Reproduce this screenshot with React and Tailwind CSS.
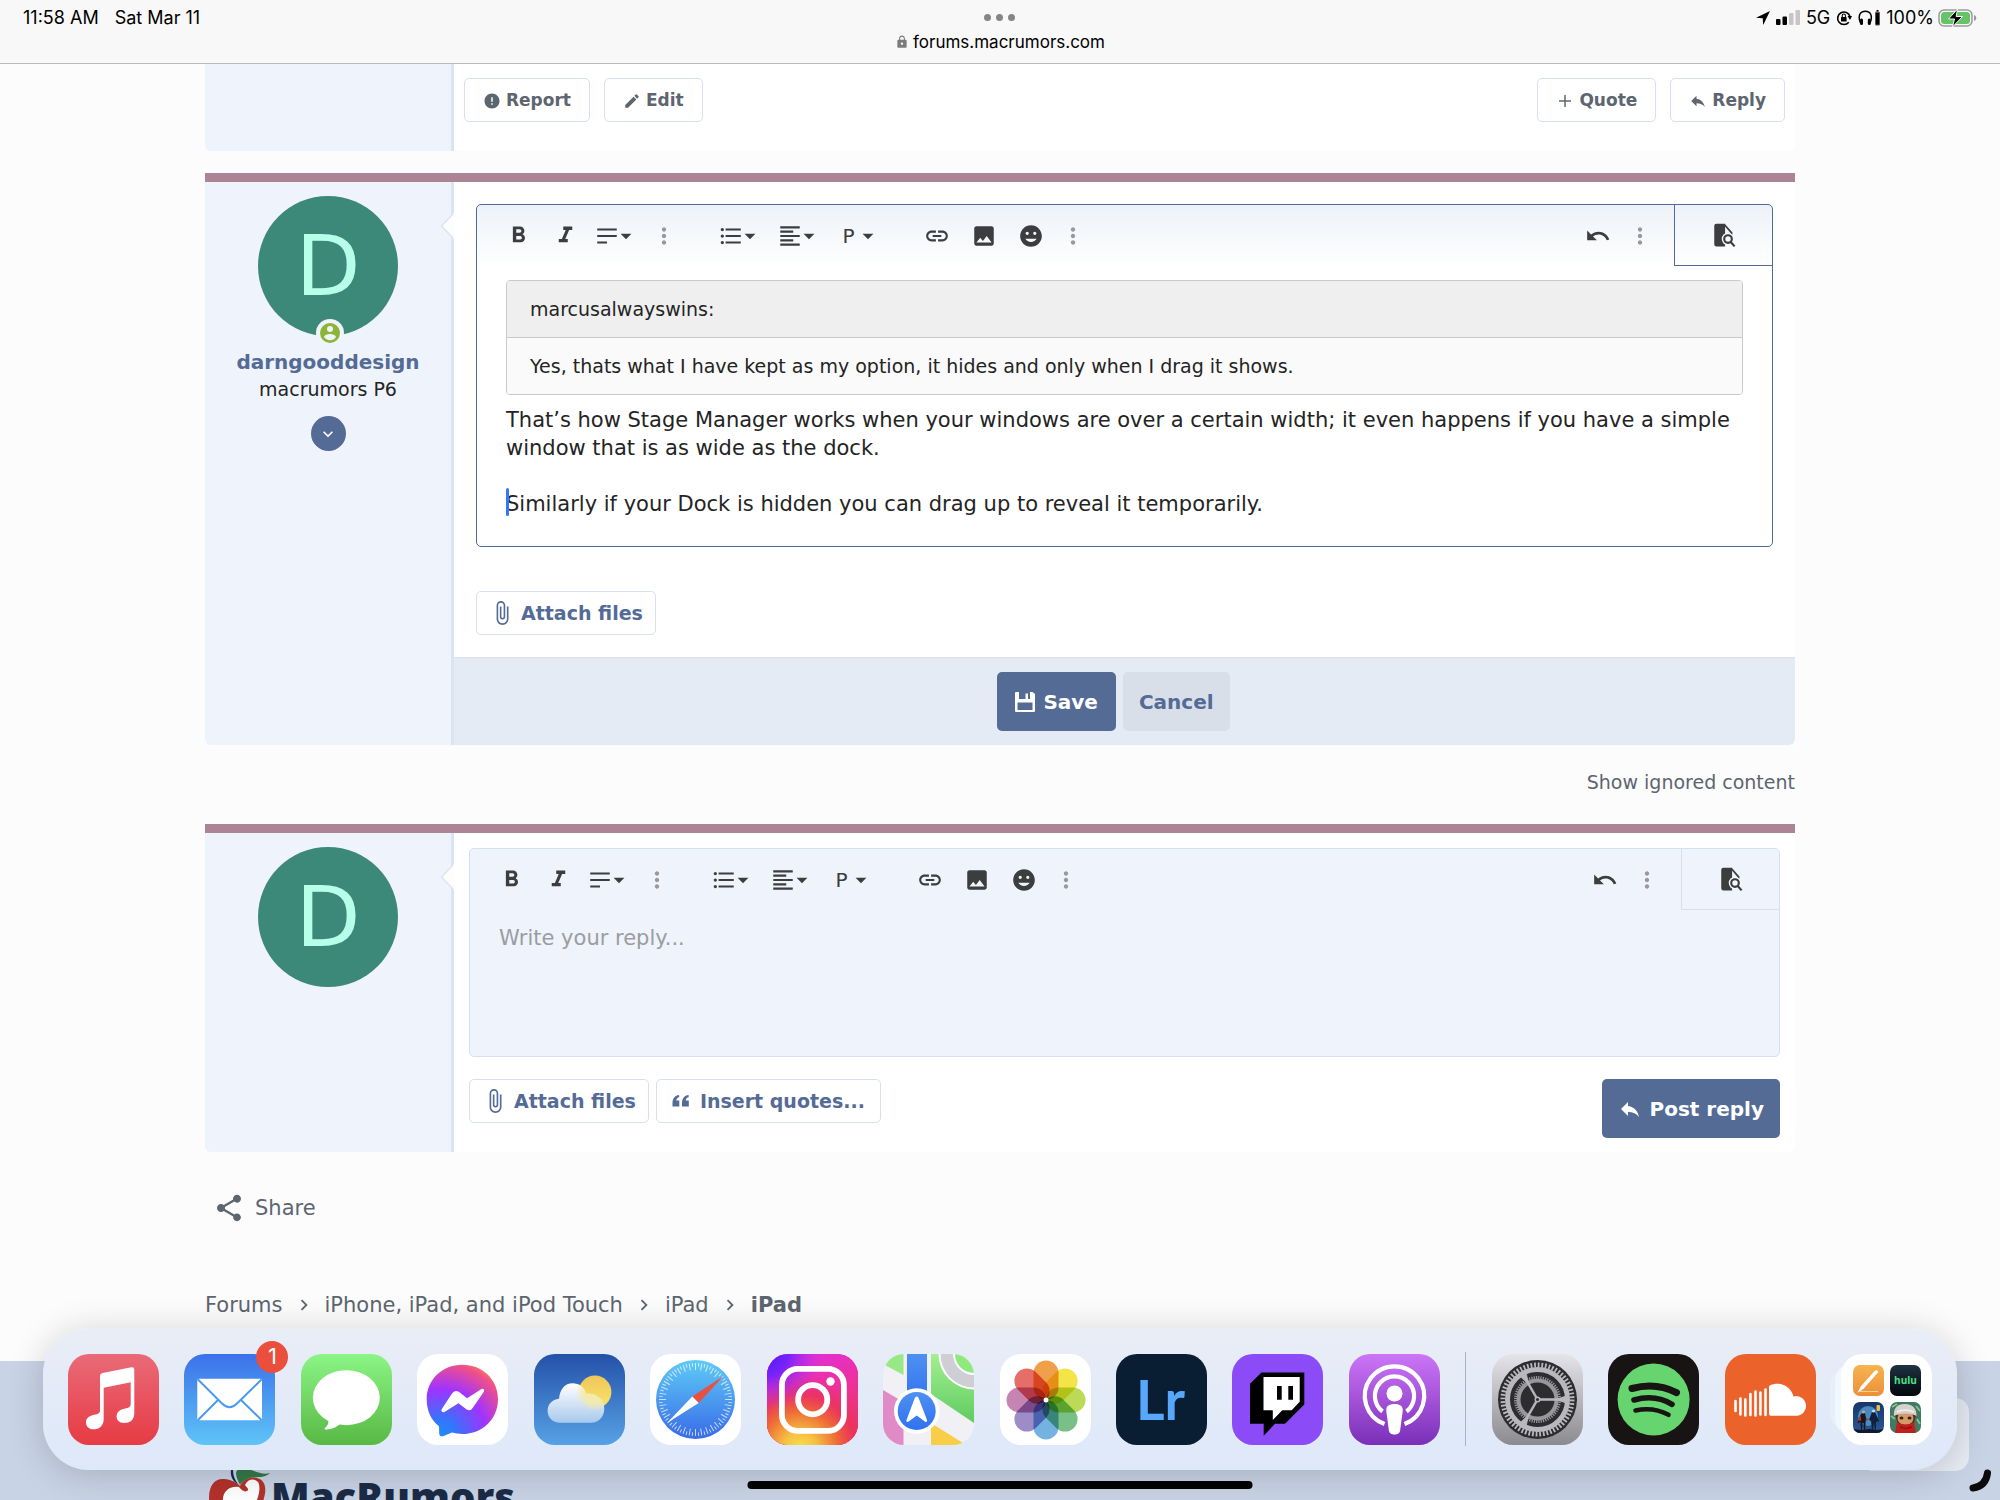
import {
  MdArrowDropDown,
  MdAttachFile,
  MdChevronRight,
  MdEdit,
  MdError,
  MdExpandMore,
  MdFormatAlignLeft,
  MdFormatBold,
  MdFormatItalic,
  MdFormatListBulleted,
  MdImage,
  MdInsertLink,
  MdLock,
  MdMoreVert,
  MdReply,
  MdShare,
  MdUndo,
} from "react-icons/md";

/* ---------- small glyphs ---------- */

const Svg = ({ children, className, box = "0 0 24 24" }) => (
  <svg viewBox={box} className={className} fill="currentColor" aria-hidden="true">
    {children}
  </svg>
);

const ParagraphLines = ({ className }) => (
  <Svg className={className}>
    <path d="M3 5h18v2H3zM3 11h18v2H3zM3 17h9v2H3z" />
  </Svg>
);

const Smiley = ({ className }) => (
  <Svg className={className}>
    <path d="M12 2C6.5 2 2 6.5 2 12s4.500 10 10 10 10-4.500 10-10S17.500 2 12 2zM8.500 8A1.500 1.500 0 0 1 10 9.500 1.500 1.500 0 0 1 8.500 11 1.500 1.500 0 0 1 7 9.500 1.500 1.500 0 0 1 8.500 8zm7 0A1.500 1.500 0 0 1 17 9.500a1.500 1.500 0 0 1-1.500 1.500A1.500 1.500 0 0 1 14 9.500 1.500 1.500 0 0 1 15.500 8zM12 17.500c-2.300 0-4.300-1.200-5.200-3h10.400c-.9 1.800-2.900 3-5.200 3z" />
  </Svg>
);

const FileFind = ({ className }) => (
  <Svg className={className}>
    <path d="M5 1.500a2 2 0 0 0-2 2v17a2 2 0 0 0 2 2h8V1.500z" />
    <path d="M12.500 2.500l6.500 7.500v3" fill="none" stroke="currentColor" strokeWidth="1.600" />
    <circle cx="15.700" cy="15.700" r="5.800" fill="#f5f8fc" />
    <circle cx="15.700" cy="15.700" r="3.500" fill="none" stroke="currentColor" strokeWidth="2" />
    <path d="M18 18.200l3.800 4.300" stroke="currentColor" strokeWidth="2" />
  </Svg>
);

const Floppy = ({ className }) => (
  <Svg className={className} box="0 0 20 20">
    <path
      fillRule="evenodd"
      d="M1 0h3v7h6.500V1.500h2.500V7h2V0h2.500L20 2v17a1 1 0 0 1-1 1H1a1 1 0 0 1-1-1V1a1 1 0 0 1 1-1zm1.500 10.500v7.500h15v-7.500z"
    />
  </Svg>
);

const Quotes = ({ className }) => (
  <Svg className={className} box="0 0 18 14">
    <path d="M7 1C3 1.500.500 4.500.500 9v3.500h6.800V6.500H4.200C4.400 4.700 5.500 3.500 7.300 3zM16.500 1C12.500 1.500 10 4.500 10 9v3.500h6.800V6.500h-3.100c.2-1.800 1.300-3 3.100-3.500z" />
  </Svg>
);

/* ---------- status bar ---------- */

const StatusBar = () => (
  <header className="grid h-16 shrink-0 grid-cols-3 border-b border-[#b9b9bb] bg-[#f8f8f8] px-[23px] font-['Inter',sans-serif] text-[18px] leading-[20px] text-black">
    <div className="flex gap-4 pt-[8px]">
      <span>11:58 AM</span>
      <span>Sat Mar 11</span>
    </div>
    <div className="flex flex-col items-center gap-[11px] pt-[14px]">
      <div className="flex gap-[5px]">
        <span className="size-[7px] rounded-full bg-[#858585]" />
        <span className="size-[7px] rounded-full bg-[#858585]" />
        <span className="size-[7px] rounded-full bg-[#858585]" />
      </div>
      <div className="flex items-center gap-[4px] text-[17px]">
        <MdLock className="size-[14px] text-[#7b7b7b]" />
        <span>forums.macrumors.com</span>
      </div>
    </div>
    <div className="flex h-[35px] items-center justify-end gap-[6px]">
      <svg viewBox="0 0 14 14" className="size-[14px]">
        <path d="M14 0L0 6.800l6.700.5.5 6.700z" />
      </svg>
      <svg viewBox="0 0 24 15" className="h-[15px] w-[24px]">
        <rect x="0" y="9" width="4.500" height="6" rx="1" />
        <rect x="6.500" y="6.500" width="4.500" height="8.500" rx="1" />
        <rect x="13" y="3" width="4.500" height="12" rx="1" fill="#c6c6c6" />
        <rect x="19.500" y="0" width="4.500" height="15" rx="1" fill="#c6c6c6" />
      </svg>
      <span>5G</span>
      <svg viewBox="0 0 16 16" className="size-[16px]">
        <path d="M12.800 12.300A6.300 6.300 0 1 1 14 6.500" fill="none" stroke="#000" strokeWidth="1.600" />
        <path d="M11.500 6h4.500l-2 4z" />
        <rect x="5" y="7" width="5.600" height="4.500" rx=".6" />
        <path d="M6.200 7V5.600a1.600 1.600 0 0 1 3.200 0V7" fill="none" stroke="#000" strokeWidth="1.100" />
      </svg>
      <svg viewBox="0 0 22 16" className="h-[16px] w-[22px]">
        <path d="M2.500 13C-.5 6 2 1.200 7.300 1.200S15 6 12.100 13" fill="none" stroke="#000" strokeWidth="1.500" />
        <rect x="2" y="8.500" width="3" height="6.500" rx="1.500" />
        <rect x="9.800" y="8.500" width="3" height="6.500" rx="1.500" />
        <rect x="17" y="1.500" width="5" height="14" rx="1.500" fill="#555" />
        <rect x="18" y="3" width="3" height="11.500" />
        <rect x="18.500" y="0" width="2" height="1.500" />
      </svg>
      <div className="flex items-center gap-[4px]">
        <span>100%</span>
        <svg viewBox="0 0 39 18" className="h-[18px] w-[39px]">
          <rect x="1" y="1" width="33" height="16" rx="5" fill="none" stroke="#9b9b9b" strokeWidth="1.500" />
          <rect x="3" y="3" width="29" height="12" rx="3.500" fill="#65c466" />
          <path d="M36 6v6c3-1 3-5 0-6z" fill="#9b9b9b" />
          <path d="M19.500 0L10.500 10h6l-2 8L24.500 7.500h-6.300z" fill="#000" stroke="#f8f8f8" strokeWidth="1" />
        </svg>
      </div>
    </div>
  </header>
);

/* ---------- posts ---------- */

const Avatar = () => (
  <div className="mt-[14px] flex size-[140px] items-center justify-center rounded-full bg-[#3d8979] text-[84px] leading-none text-[#b8ffe9]">
    D
  </div>
);

const Sidebar = ({ children, notch }) => (
  <aside className="relative flex w-[249px] shrink-0 flex-col items-center rounded-bl-md border-r-[3px] border-[#dbe4f1] bg-[#eff3fb]">
    {children}
    {notch && (
      <svg viewBox="0 0 14 26" className="absolute -right-[3px] top-[31px] h-[26px] w-[14px]">
        <path d="M14 0L1.500 13 14 26z" fill="#fdfdfe" />
        <path d="M13 1L1.500 13 13 25" fill="none" stroke="#dbe4f1" strokeWidth="1.500" />
      </svg>
    )}
  </aside>
);

const outline =
  "flex h-[44px] items-center rounded-[5px] border border-[#d6e0ef] bg-white font-bold";

const PostAction = ({ icon: Icon, children }) => (
  <button className={`${outline} gap-[5px] px-[18px] pt-[2px] text-[17px] text-[#5d6570]`}>
    <Icon className="size-[18px]" />
    {children}
  </button>
);

const AttachButton = () => (
  <button className={`${outline} gap-[6px] px-[12px] text-[19px] text-[#546b96]`}>
    <MdAttachFile className="size-[26px]" />
    Attach files
  </button>
);

const PlusThin = ({ className }) => (
  <Svg className={className}>
    <path d="M11 4h2v7h7v2h-7v7h-2v-7H4v-2h7z" />
  </Svg>
);

/* ---------- editor ---------- */

const Tool = ({ label, children, width = "w-[47px]" }) => (
  <button aria-label={label} className={`flex h-full items-center justify-center ${width}`}>
    {children}
  </button>
);

const Caret = () => <MdArrowDropDown className="-ml-[7px] -mr-[5px] size-[26px]" />;

const Dots = () => <MdMoreVert className="size-[26px] text-[#999]" />;

const Toolbar = ({ line }) => (
  <div className="flex h-[61px] items-center pl-[18px] text-[#3c3d3e]">
    <Tool label="Bold"><MdFormatBold className="size-[27px]" /></Tool>
    <Tool label="Italic"><MdFormatItalic className="size-[27px]" /></Tool>
    <Tool label="More text" width="w-[50px]">
      <ParagraphLines className="size-[26px]" />
      <Caret />
    </Tool>
    <Tool label="More options" width="w-[50px]"><Dots /></Tool>
    <div className="w-[19px]" />
    <Tool label="List" width="w-[59px]">
      <MdFormatListBulleted className="size-[26px]" />
      <Caret />
    </Tool>
    <Tool label="Alignment" width="w-[59px]">
      <MdFormatAlignLeft className="size-[26px]" />
      <Caret />
    </Tool>
    <Tool label="Paragraph format" width="w-[59px]">
      <span className="w-[26px] text-[20px]">P</span>
      <Caret />
    </Tool>
    <div className="w-[28px]" />
    <Tool label="Insert link"><MdInsertLink className="size-[26px]" /></Tool>
    <Tool label="Insert image"><MdImage className="size-[26px]" /></Tool>
    <Tool label="Smilies"><Smiley className="size-[26px]" /></Tool>
    <Tool label="Insert more" width="w-[38px]"><Dots /></Tool>
    <div className="flex-1" />
    <Tool label="Undo"><MdUndo className="size-[26px]" /></Tool>
    <Tool label="More history" width="w-[38px]"><Dots /></Tool>
    <div className="w-[15px]" />
    <div className={`h-full w-[98px] border-b border-l ${line}`}>
      <Tool label="Preview" width="w-full"><FileFind className="size-[26px]" /></Tool>
    </div>
  </div>
);

const EditEditor = () => (
  <div className="rounded-[5px] border border-[#4f6a9c] bg-white bg-[linear-gradient(#edf2f8,#ffffff_62px)]">
    <Toolbar line="border-[#4f6a9c]" />
    <div
      role="textbox"
      aria-label="Message"
      contentEditable
      suppressContentEditableWarning
      className="px-[29px] pb-[28px] pt-[14px] text-[21px] leading-[28px] text-[#242424] outline-none"
    >
      <blockquote className="overflow-hidden rounded-[4px] border border-[#c9c9c9] text-[19px]">
        <div className="border-b border-[#c9c9c9] bg-[#efefef] px-[23px] py-[14px]">marcusalwayswins:</div>
        <div className="bg-[#fafafa] px-[23px] py-[14px]">
          Yes, thats what I have kept as my option, it hides and only when I drag it shows.
        </div>
      </blockquote>
      <p className="mt-[11px]">
        That’s how Stage Manager works when your windows are over a certain width; it even happens if you have a simple
        window that is as wide as the dock.
      </p>
      <p className="relative mt-[28px]">
        <span className="absolute -top-[2px] left-0 h-[28px] w-[3px] rounded-full bg-[#3478f6]" />
        Similarly if your Dock is hidden you can drag up to reveal it temporarily.
      </p>
    </div>
  </div>
);

const ReplyEditor = () => (
  <div className="rounded-[5px] border border-[#d6e0ef] bg-[#eff3fb]">
    <Toolbar line="border-[#d6e0ef]" />
    <textarea
      aria-label="Write your reply"
      placeholder="Write your reply..."
      className="block h-[146px] w-full resize-none bg-transparent px-[29px] pt-[14px] text-[21px] leading-[28px] outline-none placeholder:text-[#9a9da1]"
    />
  </div>
);

/* ---------- dock icons, each on a 91 unit tile ---------- */

const Tile = ({ id, colors, fill, children }) => (
  <svg viewBox="0 0 91 91" className="size-full">
    <defs>
      {colors && (
        <linearGradient id={id} x1="0" y1="0" x2="0" y2="1">
          <stop offset="0" stopColor={colors[0]} />
          <stop offset="1" stopColor={colors[1]} />
        </linearGradient>
      )}
      <clipPath id={`${id}-clip`}>
        <rect width="91" height="91" rx="21" />
      </clipPath>
    </defs>
    <g clipPath={`url(#${id}-clip)`}>
      <rect width="91" height="91" fill={colors ? `url(#${id})` : fill} />
      {children}
    </g>
  </svg>
);

const Music = () => (
  <Tile id="music" colors={["#ea6a78", "#e63b44"]}>
    <path
      fill="#fff"
      d="M32 22Q32 19.500 34.500 19L63.500 13.200Q66.300 12.800 66.300 15.500V59C66.300 66 62 69 56 69C51 69 48.600 66 48.600 62.500C48.600 58 52 55.500 57 54.500C61 53.700 62.700 53 62.700 50V28.200L35.700 33.700V65C35.700 72 31 75.300 25.500 75.300C20.500 75.300 18 72 18 68.500C18 64 21.500 61.700 26 60.800C30.500 60 32 59 32 56Z"
    />
  </Tile>
);

const Mail = () => (
  <Tile id="mail" colors={["#3b71ea", "#5fc4f7"]}>
    <rect x="13.300" y="24.700" width="64.700" height="41.600" rx="2" fill="#fff" />
    <path
      d="M14 25.500L38 49.500Q45.500 57 53 49.500L77.500 25.500M34 46L14 66M57 46L77.500 66"
      fill="none"
      stroke="#4a9af0"
      strokeWidth="2"
    />
  </Tile>
);

const Messages = () => (
  <Tile id="messages" colors={["#8bf585", "#58b844"]}>
    <ellipse cx="45.300" cy="43.700" rx="33.500" ry="27.500" fill="#fff" />
    <path d="M27 64Q29 70 23.500 74.500Q24 76 26 75.500Q35 74.500 40 69Z" fill="#fff" />
  </Tile>
);

const Messenger = () => (
  <Tile id="messenger" fill="#fff">
    <defs>
      <radialGradient id="bubble" cx=".19" cy=".99" r="1.090">
        <stop offset="0" stopColor="#1e8dfb" />
        <stop offset=".2" stopColor="#3276fb" />
        <stop offset=".6" stopColor="#a033ff" />
        <stop offset=".93" stopColor="#f0508a" />
        <stop offset="1" stopColor="#f1706a" />
      </radialGradient>
    </defs>
    <path
      fill="url(#bubble)"
      d="M45.300 10.700C65.500 10.700 81 25.500 81 45.200S65.500 80 45.300 80C41.500 80 38 79.400 35 78.600L26 82.200Q22.500 83 22.200 79.500L22 72.300C14 66 9.700 56.500 9.700 45.200C9.700 25.500 25.500 10.700 45.300 10.700Z"
    />
    <path
      fill="#fff"
      d="M24.500 55.500L35 39.500Q38 35 42.500 38.300L50 44.200L64.500 35Q67.500 34.300 67 37.500L56 53.500Q53.500 58 49 55L41.500 49.300L27 58.200Q24 58.500 24.500 55.500Z"
    />
  </Tile>
);

const cloud =
  "M25 44.800C26 35 31 29.300 38.500 29.300C45.500 29.300 50 33 52 39.800C62 38.500 70.300 45 70.300 54.500C70.300 63 64.500 68.700 57 68.700H26C18.500 68.700 13.600 63.500 13.600 56.800C13.600 50.500 18 45.500 25 44.800Z";

const Weather = () => (
  <Tile id="weather" colors={["#2451a8", "#56a2e6"]}>
    <defs>
      <linearGradient id="sun" x1="0" y1="0" x2="0" y2="1">
        <stop offset="0" stopColor="#f0c55a" />
        <stop offset="1" stopColor="#f8e66a" />
      </linearGradient>
      <linearGradient id="cloud" x1="0" y1="0" x2="0" y2="1">
        <stop offset="0" stopColor="#fff" />
        <stop offset="1" stopColor="#a9c9ec" />
      </linearGradient>
      <radialGradient id="glow">
        <stop offset=".6" stopColor="#f7eaa0" stopOpacity=".85" />
        <stop offset="1" stopColor="#f7eaa0" stopOpacity="0" />
      </radialGradient>
      <clipPath id="cloud-clip"><path d={cloud} /></clipPath>
    </defs>
    <circle cx="61" cy="38" r="16.400" fill="url(#sun)" />
    <path d={cloud} fill="url(#cloud)" />
    <circle cx="61" cy="38" r="19" fill="url(#glow)" clipPath="url(#cloud-clip)" />
  </Tile>
);

const Safari = () => (
  <Tile id="safari" fill="#fff">
    <defs>
      <linearGradient id="dial" x1="0" y1="0" x2="0" y2="1">
        <stop offset="0" stopColor="#5fcbf6" />
        <stop offset="1" stopColor="#386be8" />
      </linearGradient>
    </defs>
    <circle cx="45.500" cy="45.500" r="39.500" fill="url(#dial)" />
    {Array.from({ length: 72 }, (_, i) => (
      <path
        key={i}
        d={i % 2 ? "M45.500 9v3.500" : "M45.500 9v7"}
        stroke="#fff"
        strokeOpacity=".7"
        transform={`rotate(${i * 5} 45.500 45.500)`}
      />
    ))}
    <path d="M73.500 22L42.300 42.500L48.700 49Z" fill="#e8503f" />
    <path d="M17 69L42.300 42.500L48.700 49Z" fill="#fff" />
  </Tile>
);

const Instagram = () => (
  <Tile id="instagram" fill="#e92f8c">
    <defs>
      <linearGradient id="ig-base" x1="0" y1="0" x2=".3" y2="1">
        <stop offset="0" stopColor="#dc30e8" />
        <stop offset=".45" stopColor="#ec30a8" />
        <stop offset="1" stopColor="#ee3560" />
      </linearGradient>
      <radialGradient id="ig-warm" cx=".36" cy="1.050" r=".85">
        <stop offset="0" stopColor="#fbe04a" />
        <stop offset=".22" stopColor="#f6c043" />
        <stop offset=".5" stopColor="#ee6a35" />
        <stop offset=".72" stopColor="#ea3358" stopOpacity=".8" />
        <stop offset="1" stopColor="#e92f8c" stopOpacity="0" />
      </radialGradient>
      <radialGradient id="ig-cool" cx="0" cy="0" r=".6">
        <stop offset="0" stopColor="#4a1cff" />
        <stop offset=".4" stopColor="#7a22f8" />
        <stop offset="1" stopColor="#c030f0" stopOpacity="0" />
      </radialGradient>
    </defs>
    <rect width="91" height="91" fill="url(#ig-base)" />
    <rect width="91" height="91" fill="url(#ig-warm)" />
    <rect width="91" height="91" fill="url(#ig-cool)" />
    <g fill="none" stroke="#fff" strokeWidth="5.800">
      <rect x="14.900" y="14.900" width="62" height="62" rx="16" />
      <circle cx="45.700" cy="45.700" r="14.600" />
    </g>
    <circle cx="63.500" cy="27.500" r="4.200" fill="#fff" />
  </Tile>
);

const Maps = () => (
  <Tile id="maps" fill="#f1f0f5">
    <defs>
      <linearGradient id="park" x1="0" y1="0" x2="0" y2="1">
        <stop offset="0" stopColor="#a2f08e" />
        <stop offset="1" stopColor="#60cb62" />
      </linearGradient>
      <linearGradient id="road" x1="0" y1="0" x2="0" y2="1">
        <stop offset="0" stopColor="#4f90f2" />
        <stop offset="1" stopColor="#2f72f0" />
      </linearGradient>
    </defs>
    <path d="M0 0H20.500V21L0 10Z" fill="#97e986" />
    <path d="M48 0H91V69L48 40Z" fill="url(#park)" />
    <circle cx="91" cy="0" r="35.500" fill="#fff" />
    <circle cx="91" cy="0" r="33.500" fill="#cfced4" />
    <circle cx="91" cy="0" r="21" fill="#fff" />
    <circle cx="91" cy="0" r="19" fill="#8fe97f" />
    <path d="M0 36L20.500 48V91H0Z" fill="#e18ac8" />
    <path d="M48 69L80 89V91H48Z" fill="#f7ce45" />
    <path d="M24 0H44V50H24Z" fill="url(#road)" />
    <circle cx="33.700" cy="57" r="22.700" fill="#fff" />
    <circle cx="33.700" cy="57" r="19" fill="url(#road)" />
    <path d="M33.700 42.500C35 42.500 35.500 43.500 36 45L44 66C44.500 68 43 68.500 41.500 67.300L33.700 61.500L26 67.300C24.500 68.500 23 68 23.500 66L31.400 45C32 43.500 32.500 42.500 33.700 42.500Z" fill="#fff" />
  </Tile>
);

const petals = ["#f0a04b", "#f3e448", "#bcd957", "#78c088", "#74b2e2", "#9d8cc6", "#c684b2", "#e56e68"];

const Photos = () => (
  <Tile id="photos" fill="#fff">
    {petals.map((color, i) => (
      <rect
        key={color}
        x="33.500"
        y="6.500"
        width="25"
        height="39.500"
        rx="12.500"
        fill={color}
        className="mix-blend-multiply"
        transform={`rotate(${i * 45} 46 46)`}
      />
    ))}
    <circle cx="46" cy="46" r="2.500" fill="#fff" />
  </Tile>
);

const Lightroom = () => (
  <Tile id="lightroom" fill="#0a1e33">
    <text x="20" y="65.500" fontSize="55" fill="#57a7fa" className="font-['Lato',sans-serif] font-bold">
      Lr
    </text>
  </Tile>
);

const Twitch = () => (
  <Tile id="twitch" fill="#8b4bf7">
    <path d="M29.500 18.500H72.300V50.500L53 69.700H43L31.700 81.700V69.700H18V29.700Z" />
    <path d="M31.500 23H67.700V47.700L59.700 56.300H50.300L40.800 66V56.300H31.500Z" fill="#fff" />
    <path d="M45 32h4.700v13.700H45zM56.300 32H61v13.700h-4.700z" />
  </Tile>
);

const Podcasts = () => (
  <Tile id="podcasts" colors={["#cc75f7", "#7a2fb8"]}>
    <g fill="none" stroke="#fff" strokeWidth="4.200">
      <path d="M35.500 70A29.700 29.700 0 1 1 55.500 70" />
      <path d="M33.500 57.500A19.600 19.600 0 1 1 57.500 57.500" />
    </g>
    <circle cx="45.500" cy="39.500" r="8" fill="#fff" />
    <path d="M45.500 50C51 50 54.200 52 53.700 57L51.200 76C50.700 79.500 48.500 80.500 45.500 80.500S40.300 79.500 39.800 76L37.300 57C36.800 52 40 50 45.500 50Z" fill="#fff" />
  </Tile>
);

const Settings = () => (
  <Tile id="settings" colors={["#e5e4ea", "#8b8a8f"]}>
    <circle cx="45.500" cy="45.500" r="39.500" fill="#2d2d2f" />
    <circle cx="45.500" cy="45.500" r="34.500" fill="none" stroke="#b9b8be" strokeWidth="5" strokeDasharray="1.800 1.812" />
    <circle cx="45.500" cy="45.500" r="30" fill="none" stroke="#b9b8be" strokeWidth="5" />
    <circle cx="45.500" cy="45.500" r="19" fill="none" stroke="#98979c" strokeWidth="4" />
    <circle cx="45.500" cy="45.500" r="22" fill="none" stroke="#98979c" strokeWidth="3" strokeDasharray="1.200 1.104" />
    {[0, 120, 240].map((angle) => (
      <g key={angle} transform={`rotate(${angle} 45.500 45.500)`}>
        <path d="M45.500 44.600H66L74 42V49L66 46.400H45.500Z" fill="#b9b8be" stroke="#b9b8be" strokeWidth=".6" />
      </g>
    ))}
    <circle cx="45.500" cy="45.500" r="3" fill="#b9b8be" />
    <circle cx="45.500" cy="45.500" r="1.500" fill="#2d2d2f" />
  </Tile>
);

const Spotify = () => (
  <Tile id="spotify" fill="#191414">
    <circle cx="45.600" cy="45.600" r="36" fill="#66d56f" />
    <g fill="none" stroke="#191414" strokeLinecap="round">
      <path d="M24 34.500Q48 28 68.500 38.700" strokeWidth="7" />
      <path d="M26 46Q47 40 64 50.300" strokeWidth="5.600" />
      <path d="M27.500 56.500Q45 52.500 60.500 60.800" strokeWidth="4.600" />
    </g>
  </Tile>
);

const SoundCloud = () => (
  <Tile id="soundcloud" fill="#ec622b">
    <path
      d="M10.500 47v10M15.400 44.500v16M20.300 45.500v16M25.400 40v21M30.500 37.500v24M35.400 38.500v22M40.500 35.500v25.500"
      stroke="#fff"
      strokeWidth="2.600"
      strokeLinecap="round"
    />
    <path d="M44 32C47 30 50 29.700 52.500 29.700C60.500 29.700 67 35.500 68.500 42.500A9.800 9.800 0 1 1 71.500 61.700H46Q44 61.700 44 59.700Z" fill="#fff" />
  </Tile>
);

/* ---------- app library folder ---------- */

const PagesMini = () => (
  <svg viewBox="0 0 31 31" className="size-[31px] rounded-[7px] bg-linear-to-b from-[#f5b550] to-[#ec8f3a]">
    <path d="M6 26L8 22L22 6.500Q24 5 24.500 7L10 23.500Z" fill="#fff" stroke="#fff" strokeWidth="1.200" />
    <path d="M7 26.500h18" stroke="#f9cf94" strokeWidth="1" />
  </svg>
);

const HuluMini = () => (
  <svg viewBox="0 0 31 31" className="size-[31px] rounded-[7px] bg-linear-to-b from-[#1e3342] to-[#04080d]">
    <text x="15.500" y="19" textAnchor="middle" fontSize="10" fill="#4be083" className="font-['Open_Sans',sans-serif] font-bold">
      hulu
    </text>
  </svg>
);

const HeroesMini = () => (
  <svg viewBox="0 0 31 31" className="size-[31px] rounded-[7px] bg-linear-to-b from-[#173568] to-[#2a5a96]">
    <circle cx="15" cy="14" r="10" fill="#5aa8e2" opacity=".7" />
    <path d="M0 31V27L8 28 16 27 24 28 31 27V31Z" fill="#10192b" />
    <path d="M9 11h3l1 5-1 12h-1l-.500-7-1 0-.5 7H8l-.5-8-3 1 3-8z" fill="#1b1520" />
    <path d="M19 10h3l4 9-3 1v8h-1l-1-7-1 7h-1l-1-9-2-1z" fill="#12203b" />
    <path d="M4 18l4-4v5zM13 16l3 1-3 2z" fill="#a53a34" />
    <circle cx="10.500" cy="10" r="1.600" fill="#c9a58b" />
    <circle cx="20.500" cy="9" r="1.600" fill="#cfd6e4" />
    <rect x="23.500" y="3" width="3.500" height="6" rx="1" fill="#e6c04c" />
  </svg>
);

const ScarfMini = () => (
  <svg viewBox="0 0 31 31" className="size-[31px] rounded-[7px] bg-[#3f7a62]">
    <path d="M2 5l5-3M1 14l4 3M26 4l4 5M27 17l3 5" stroke="#8dbb8f" strokeWidth="2" />
    <path d="M5 13L9 25H23L26 13Z" fill="#5b2c1c" />
    <ellipse cx="15.500" cy="16" rx="8" ry="7" fill="#d69a68" />
    <path d="M4 14C3 5 9 1.500 15 2C23 2 27 7 26.500 14C22 10.500 9 10.500 4 14Z" fill="#d4d0cb" />
    <path d="M7 10Q15 6 24 10" fill="none" stroke="#f1efec" strokeWidth="1.500" />
    <ellipse cx="11.500" cy="16" rx="2" ry="1.600" fill="#2c2a1c" />
    <ellipse cx="19.500" cy="16" rx="2" ry="1.600" fill="#2c2a1c" />
    <path d="M7 20Q15.500 25 24 20L26 31H5Z" fill="#bf1f1d" />
    <path d="M10 25Q15 28 22 25" stroke="#7d0f10" fill="none" />
  </svg>
);

const Folder = () => (
  <div className="relative h-full">
    <div className="absolute inset-y-[14px] -left-[11px] w-[60px] rounded-[18px] bg-[#e6f0fb]" />
    <div className="absolute inset-y-[9px] -left-[6px] w-[60px] rounded-[18px] bg-[#eff8fe]" />
    <div className="relative grid h-full grid-cols-[31px_31px] place-content-center gap-[6px] rounded-[21px] bg-white">
      <PagesMini />
      <HuluMini />
      <HeroesMini />
      <ScarfMini />
    </div>
  </div>
);

const apps = [
  ["Music", Music],
  ["Mail", Mail, 1],
  ["Messages", Messages],
  ["Messenger", Messenger],
  ["Weather", Weather],
  ["Safari", Safari],
  ["Instagram", Instagram],
  ["Maps", Maps],
  ["Photos", Photos],
  ["Lightroom", Lightroom],
  ["Twitch", Twitch],
  ["Podcasts", Podcasts],
];

const recents = [
  ["Settings", Settings],
  ["Spotify", Spotify],
  ["SoundCloud", SoundCloud],
  ["App Library", Folder],
];

const DockItem = ({ name, icon: Icon, badge }) => (
  <button aria-label={name} className="relative size-[91px]">
    <Icon />
    {badge && (
      <span className="absolute -right-[13px] -top-[13px] flex size-[32px] items-center justify-center rounded-full bg-[#ea4e3c] font-['Inter',sans-serif] text-[22px] text-white">
        {badge}
      </span>
    )}
  </button>
);

const Dock = () => (
  <nav
    aria-label="Dock"
    className="absolute inset-x-[43px] bottom-[30px] flex h-[142px] items-center justify-between rounded-[46px] bg-linear-to-b from-[#e9edf6] to-[#dde8f9] px-[25px] shadow-[0_4px_36px_rgba(0,0,0,0.18)]"
  >
    {apps.map(([name, icon, badge]) => (
      <DockItem key={name} name={name} icon={icon} badge={badge} />
    ))}
    <span className="h-[94px] w-px bg-[#a9b3c6]" />
    {recents.map(([name, icon]) => (
      <DockItem key={name} name={name} icon={icon} />
    ))}
  </nav>
);

/* ---------- site footer ---------- */

const AppleLogo = () => (
  <svg viewBox="0 0 62 60" className="h-[60px] w-[62px]">
    <path d="M0 28C0 14 7 8 15 9C22 9.500 27 12 31 16C34 9 42 6.500 48 8C56 10 58 18 55 28C52 42 44 56 30 56C14 56 0 44 0 28Z" fill="#b3322b" />
    <path d="M14 32C13 22 20 15.500 30 17C33 21 37 23 39 20C39.500 18 37 17 36 15C39 9 45 8 49 12C52 17 50 27 46 34L36 50H22Z" fill="#fff" />
    <path d="M27 3C28 -3 36 -2 42 0C48 2 54 5 61 3C55 9 47 6 40 8C35 10 32 13 31 15C29 11 27 7 27 3Z" fill="#347a48" />
    <path d="M22 0C21 6 24 12 29 14C26 10 24 6 24 0Z" fill="#1d2460" />
  </svg>
);

const crumbs = ["Forums", "iPhone, iPad, and iPod Touch", "iPad"];

export default function App() {
  return (
    <div className="relative flex h-screen flex-col overflow-hidden bg-[#fcfcfc] font-['DejaVu_Sans',sans-serif] text-[#242424]">
      <StatusBar />

      <main className="mx-auto w-full max-w-[1590px] shrink-0">
        <article className="flex h-[87px]">
          <Sidebar />
          <div className="flex flex-1 items-start justify-between rounded-br-md bg-white px-[10px] pt-[14px]">
            <div className="flex gap-[14px]">
              <PostAction icon={MdError}>Report</PostAction>
              <PostAction icon={MdEdit}>Edit</PostAction>
            </div>
            <div className="flex gap-[14px]">
              <PostAction icon={PlusThin}>Quote</PostAction>
              <PostAction icon={MdReply}>Reply</PostAction>
            </div>
          </div>
        </article>

        <article className="mt-[22px] flex border-t-[9px] border-[#ad8496]">
          <Sidebar notch>
            <div className="relative">
              <Avatar />
              <span className="absolute -bottom-[11px] left-[58px] flex size-[28px] items-center justify-center rounded-full bg-[#eff3fb] text-[#8db535]">
                <Svg className="size-[24px]">
                  <path d="M12 19.200C9.500 19.200 7.290 17.920 6 16C6.030 14 10 12.900 12 12.900C14 12.900 17.970 14 18 16A7.230 7.230 0 0 1 12 19.200M12 5A3 3 0 0 1 15 8A3 3 0 0 1 12 11A3 3 0 0 1 9 8A3 3 0 0 1 12 5M12 2A10 10 0 0 0 2 12A10 10 0 0 0 12 22A10 10 0 0 0 22 12C22 6.470 17.500 2 12 2Z" />
                </Svg>
              </span>
            </div>
            <a href="#" className="mt-[12px] text-[20px] font-bold leading-[28px] text-[#546b96]">
              darngooddesign
            </a>
            <div className="text-[19px] leading-[26px]">macrumors P6</div>
            <button
              aria-label="Show user details"
              className="mt-[14px] flex size-[35px] items-center justify-center rounded-full bg-[#546b96] text-white"
            >
              <MdExpandMore className="size-[20px]" />
            </button>
          </Sidebar>
          <div className="min-w-0 flex-1 bg-white">
            <div className="px-[22px] pt-[22px]">
              <EditEditor />
              <div className="mb-[22px] mt-[44px] flex">
                <AttachButton />
              </div>
            </div>
            <div className="flex h-[88px] items-center justify-center gap-[7px] rounded-br-md border-t border-[#d6e0ef] bg-[#e4ebf4] pr-[22px] text-[20px] font-bold">
              <button className="flex h-[59px] items-center gap-[8px] rounded-[5px] bg-[#546b96] px-[18px] text-white">
                <Floppy className="size-[20px]" />
                Save
              </button>
              <button className="h-[59px] rounded-[5px] bg-[#d8dfe9] px-[16px] text-[#546b96]">Cancel</button>
            </div>
          </div>
        </article>

        <div className="flex h-[79px] items-center justify-end pb-1 text-[19px] text-[#5d6570]">
          <a href="#">Show ignored content</a>
        </div>

        <section className="flex border-t-[9px] border-[#ad8496]">
          <Sidebar notch>
            <Avatar />
          </Sidebar>
          <div className="min-w-0 flex-1 rounded-br-md bg-white px-[15px] pb-[14px] pt-[15px]">
            <ReplyEditor />
            <div className="mt-[22px] flex items-start gap-[7px]">
              <AttachButton />
              <button className={`${outline} gap-[10px] px-[15px] text-[19px] text-[#546b96]`}>
                <Quotes className="h-[14px] w-[18px]" />
                Insert quotes...
              </button>
              <button className="ml-auto flex h-[59px] items-center gap-[8px] rounded-[5px] bg-[#546b96] px-[16px] text-[20px] font-bold text-white">
                <MdReply className="size-[24px]" />
                Post reply
              </button>
            </div>
          </div>
        </section>

        <a href="#" className="mt-[40px] flex items-center gap-[10px] pl-2 text-[21px] leading-[32px] text-[#5d6570]">
          <MdShare className="size-[32px]" />
          Share
        </a>

        <nav aria-label="Breadcrumb" className="mt-[67px] flex text-[21px] leading-[28px] text-[#5d6570]">
          {crumbs.map((crumb) => (
            <span key={crumb} className="flex items-center">
              <a href="#">{crumb}</a>
              <MdChevronRight className="mx-[10px] size-[22px]" />
            </span>
          ))}
          <a href="#" className="font-bold">iPad</a>
        </nav>
      </main>

      <footer className="mt-[42px] flex-1 bg-[#c8d3e5]">
        <a href="#" className="mx-auto flex w-full max-w-[1590px] items-start pl-1 pt-[109px]">
          <AppleLogo />
          <span className="pt-[7px] font-['Open_Sans',sans-serif] text-[40px] font-extrabold leading-[40px] text-[#1b2b47]">
            MacRumors
          </span>
        </a>
      </footer>

      {/* slide-over panel peeking out behind the dock */}
      <div className="absolute bottom-[29px] right-[31px] h-[73px] w-[110px] rounded-[14px] bg-[#e6ebf4]" />
      <Dock />
      <div className="absolute bottom-[11px] left-1/2 h-[8px] w-[505px] -translate-x-1/2 rounded-full bg-black" />
      <svg viewBox="0 0 25 25" className="absolute bottom-[7px] right-[7px] size-[25px]">
        <path d="M19.500 5Q18 18 5 20" fill="none" stroke="#0a0a0a" strokeWidth="7" strokeLinecap="round" />
      </svg>
    </div>
  );
}
